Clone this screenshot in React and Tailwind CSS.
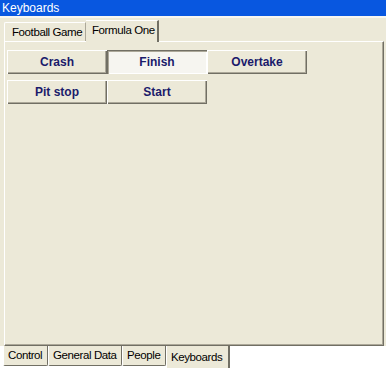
import React from "react";

const btnUp =
  "h-[24px] flex items-center justify-center bg-[#ece9d8] text-[12px] font-bold text-[#1b1b6b] shadow-[inset_1px_1px_0_#ffffff,inset_-1px_-1px_0_#716f64,inset_-2px_-2px_0_#aca899]";
const btnDown =
  "h-[24px] flex items-center justify-center bg-[#f6f5f0] text-[12px] font-bold text-[#1b1b6b] shadow-[inset_1px_1px_0_#716f64,inset_2px_2px_0_#aca899,inset_-1px_-1px_0_#ffffff]";

export default function App() {
  return (
    <div className="w-[386px] h-[368px] bg-white flex flex-col font-['Liberation_Sans',Arial,sans-serif] overflow-hidden whitespace-nowrap">
      <div className="h-[16px] bg-[#0857e0] text-white text-[12px] leading-[16px] pl-[2px]">
        Keyboards
      </div>
      <div className="h-[330px] bg-[#ece9d8] border-t-[2px] border-[#f7f6f1] flex flex-col pl-[4px] pr-[2px]">
        <div className="h-[23px] flex items-end">
          <div className="w-[82px] h-[19px] overflow-hidden border-t border-l border-white border-r border-r-[#aca899] rounded-tl-[2px] text-[11.5px] tracking-[-0.4px] text-black pl-[7px] leading-[18px]">
            Football Game
          </div>
          <div className="relative z-10 -mb-px w-[73px] h-[22px] overflow-hidden bg-[#ece9d8] border-t border-white border-r-2 border-r-[#716f64] text-[11.5px] tracking-[-0.4px] text-black pl-[6px] leading-[19px]">
            Formula One
          </div>
        </div>
        <div className="flex-1 border-t border-l border-white border-r border-b border-r-[#716f64] border-b-[#716f64] shadow-[inset_-1px_-1px_0_#aca899] pl-[2px] pt-[8px]">
          <div className="grid grid-cols-[100px_100px_100px] gap-y-[6px]">
            <div className={btnUp}>Crash</div>
            <div className={btnDown}>Finish</div>
            <div className={btnUp}>Overtake</div>
            <div className={btnUp}>Pit stop</div>
            <div className={btnUp}>Start</div>
          </div>
        </div>
      </div>
      <div className="h-[22px] flex items-start pl-[3px] text-[11.5px] tracking-[-0.4px] text-black">
        <div className="w-[45px] h-[20px] overflow-hidden bg-[#ece9d8] border-l border-white border-r border-b border-r-[#716f64] border-b-[#716f64] rounded-b-[2px] pl-[4px] leading-[18px]">
          Control
        </div>
        <div className="w-[74px] h-[20px] overflow-hidden bg-[#ece9d8] border-l border-white border-r border-b border-r-[#716f64] border-b-[#716f64] rounded-b-[2px] pl-[4px] leading-[18px]">
          General Data
        </div>
        <div className="w-[44px] h-[20px] overflow-hidden bg-[#ece9d8] border-l border-white border-r border-b border-r-[#716f64] border-b-[#716f64] rounded-b-[2px] pl-[4px] leading-[18px]">
          People
        </div>
        <div className="w-[64px] h-[22px] overflow-hidden bg-[#ece9d8] border-l border-white border-r-2 border-r-[#716f64] pl-[4px] leading-[22px]">
          Keyboards
        </div>
      </div>
    </div>
  );
}
